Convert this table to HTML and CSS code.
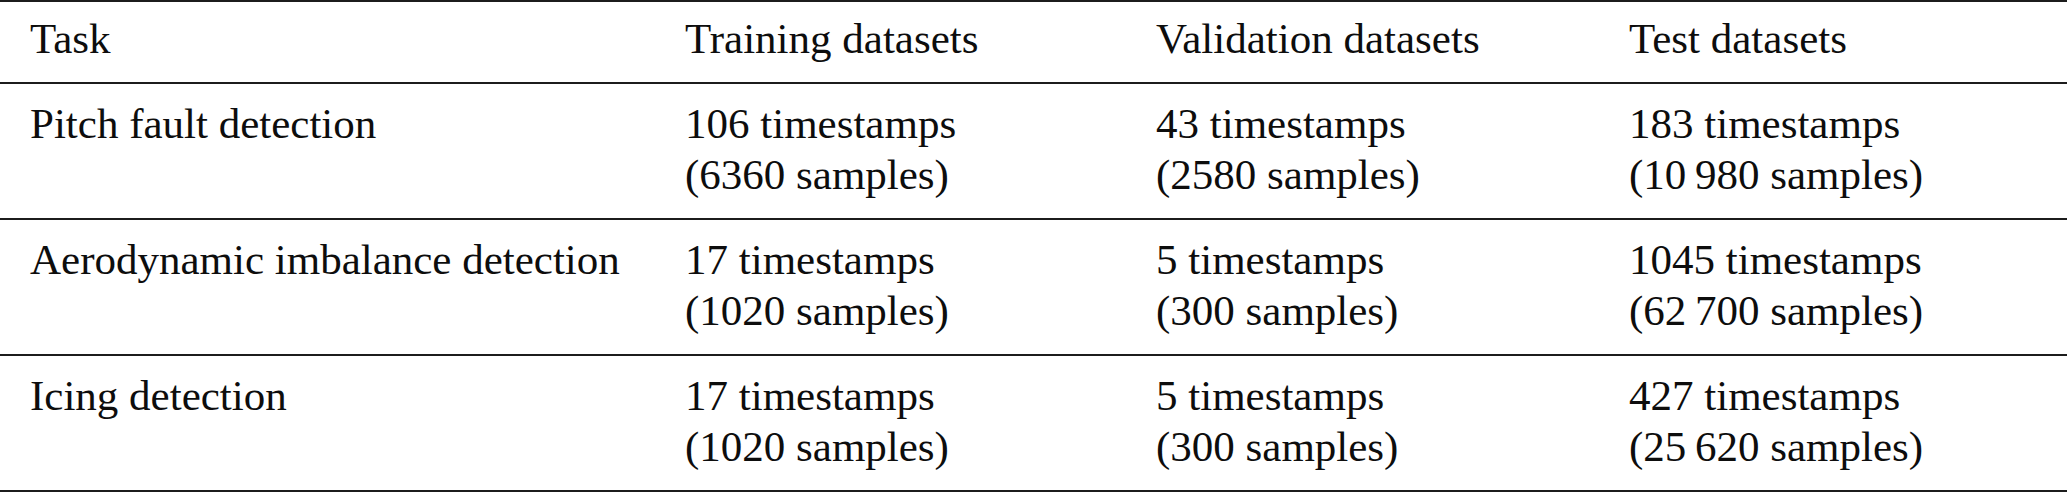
FILE: index.html
```html
<!DOCTYPE html>
<html lang="en">
<head>
<meta charset="utf-8">
<title>Datasets per task</title>
<link rel="stylesheet" href="styles.css">
</head>
<body>
<div class="table">
  <div class="row head">
    <div class="cell">Task</div>
    <div class="cell">Training datasets</div>
    <div class="cell">Validation datasets</div>
    <div class="cell">Test datasets</div>
  </div>
  <div class="row body">
    <div class="cell">Pitch fault detection<br>&nbsp;</div>
    <div class="cell">106 timestamps<br>(6360 samples)</div>
    <div class="cell">43 timestamps<br>(2580 samples)</div>
    <div class="cell">183 timestamps<br>(10&#8201;980 samples)</div>
  </div>
  <div class="row body">
    <div class="cell">Aerodynamic imbalance detection<br>&nbsp;</div>
    <div class="cell">17 timestamps<br>(1020 samples)</div>
    <div class="cell">5 timestamps<br>(300 samples)</div>
    <div class="cell">1045 timestamps<br>(62&#8201;700 samples)</div>
  </div>
  <div class="row body">
    <div class="cell">Icing detection<br>&nbsp;</div>
    <div class="cell">17 timestamps<br>(1020 samples)</div>
    <div class="cell">5 timestamps<br>(300 samples)</div>
    <div class="cell">427 timestamps<br>(25&#8201;620 samples)</div>
  </div>
</div>
</body>
</html>
```
FILE: styles.css
```css
html, body {
  margin: 0;
  padding: 0;
  background: #ffffff;
}

body {
  font-family: "Liberation Serif", "Times New Roman", serif;
  font-size: 43px;
  color: #0d0d0d;
}

.table {
  width: 2067px;
  border-top: 2px solid #1c1c1c;
}

.row {
  display: grid;
  grid-template-columns: 655px 471px 473px 1fr;
  align-items: center;
  border-bottom: 2px solid #1c1c1c;
  box-sizing: border-box;
}

.head {
  height: 82px;
  padding-bottom: 8px;
}

.body {
  height: 136px;
  padding-bottom: 4px;
}

.cell {
  padding-left: 30px;
  line-height: 51px;
  white-space: nowrap;
}
```
